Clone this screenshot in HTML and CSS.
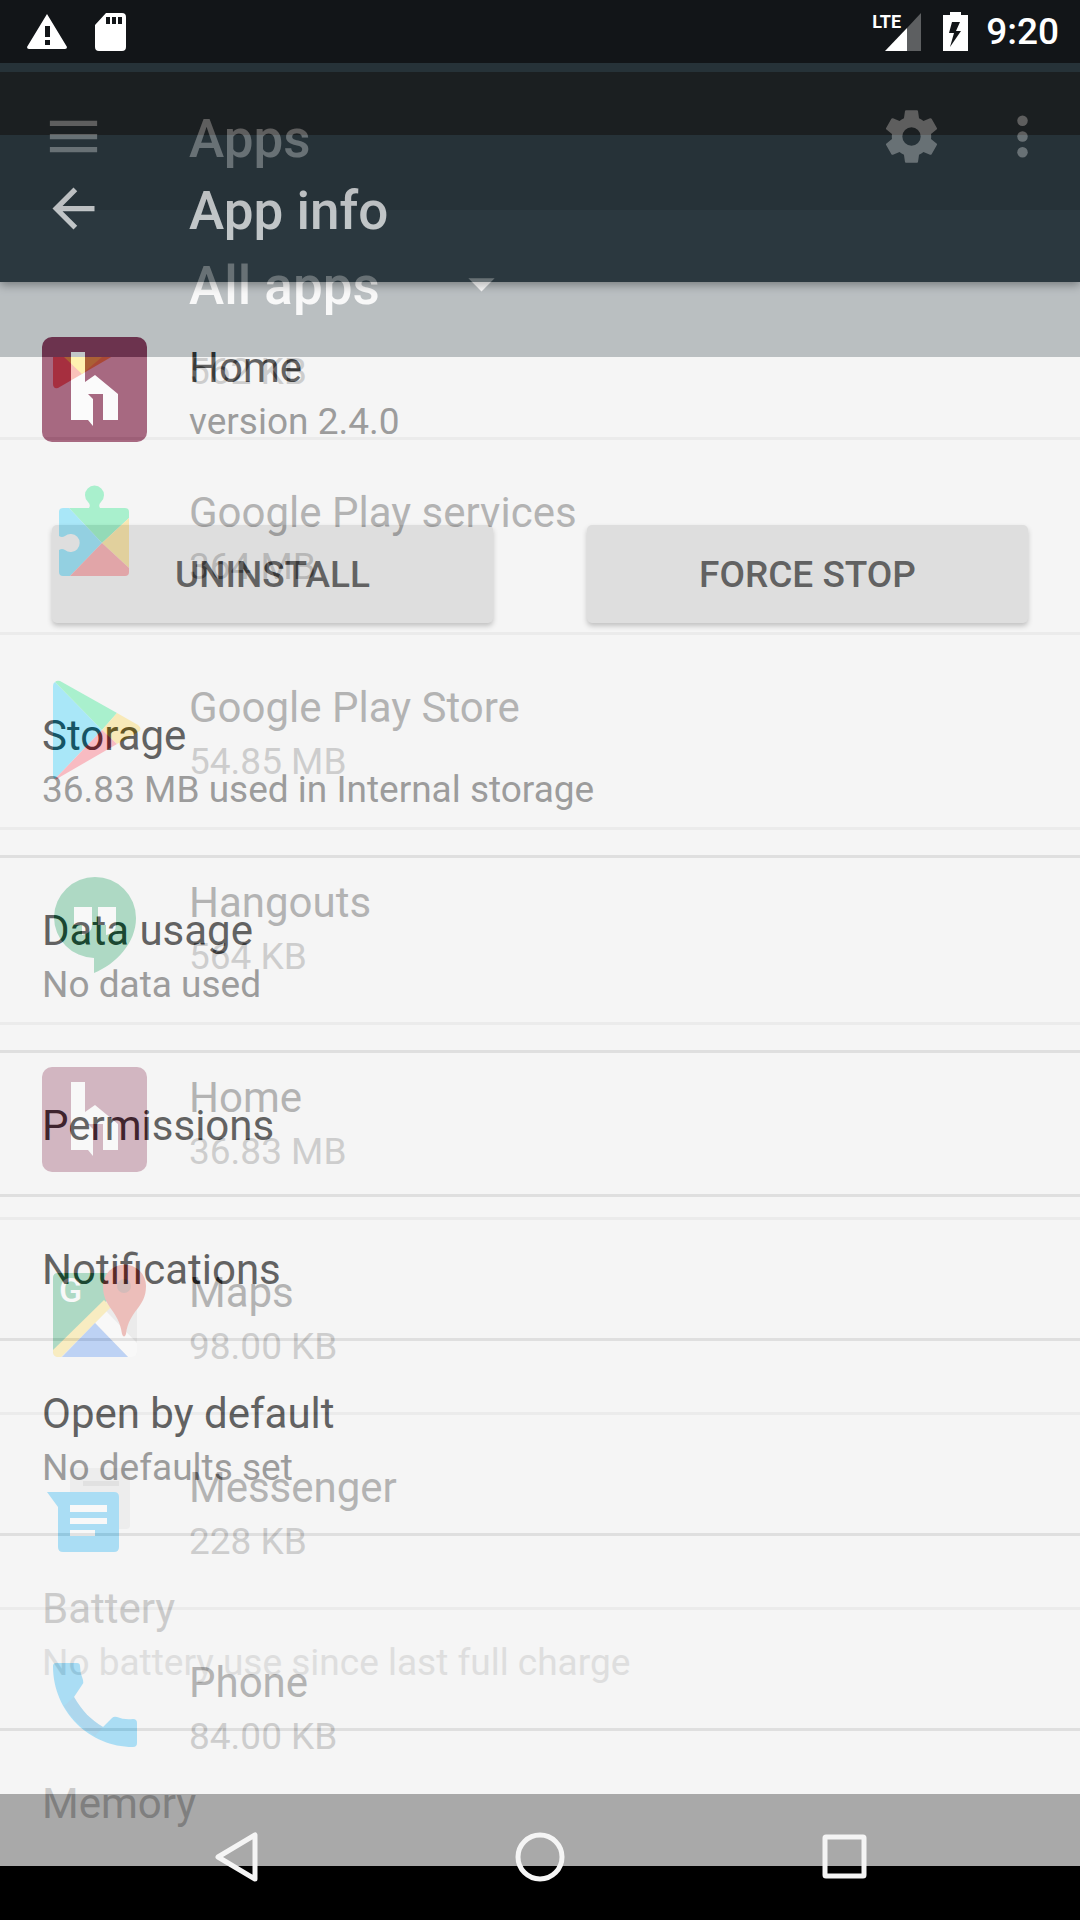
FILE: index.html
```html
<!DOCTYPE html>
<html lang="en">
<head>
<meta charset="utf-8">
<meta name="viewport" content="width=device-width, initial-scale=1">
<title>App info</title>
<link rel="stylesheet" href="styles.css">
</head>
<body>
<svg class="defs" aria-hidden="true">
  <symbol id="home-logo" viewBox="0 0 105 105">
    <rect width="105" height="105" rx="10" fill="#852b4e"/>
    <path fill="#fff" d="M29 15h14v30l10-7 23 19v26H61V57H46l5 5v27l-5-6H29z"/>
  </symbol>
</svg>
<div class="device">

  <!-- Outgoing screen: list of installed apps -->
  <section class="page apps-page">
    <header class="apps-header">
      <div class="toolbar">
        <button class="icon-button" aria-label="Menu"><svg viewBox="0 0 24 24"><path d="M3 18h18v-2H3v2zm0-5h18v-2H3v2zm0-7v2h18V6H3z"/></svg></button>
        <h1 class="toolbar-title">Apps</h1>
        <div class="toolbar-actions">
          <button class="icon-button" aria-label="Settings"><svg viewBox="0 0 24 24"><path d="M19.43 12.98c.04-.32.07-.64.07-.98s-.03-.66-.07-.98l2.11-1.65c.19-.15.24-.42.12-.64l-2-3.46c-.12-.22-.39-.3-.61-.22l-2.49 1c-.52-.4-1.08-.73-1.69-.98l-.38-2.65C14.46 2.18 14.25 2 14 2h-4c-.25 0-.46.18-.49.42l-.38 2.65c-.61.25-1.17.59-1.69.98l-2.49-1c-.23-.09-.49 0-.61.22l-2 3.46c-.13.22-.07.49.12.64l2.11 1.65c-.04.32-.07.65-.07.98s.03.66.07.98l-2.11 1.65c-.19.15-.24.42-.12.64l2 3.46c.12.22.39.3.61.22l2.49-1c.52.4 1.08.73 1.69.98l.38 2.65c.03.24.24.42.49.42h4c.25 0 .46-.18.49-.42l.38-2.65c.61-.25 1.17-.59 1.69-.98l2.49 1c.23.09.49 0 .61-.22l2-3.46c.12-.22.07-.49-.12-.64l-2.11-1.65zM12 15.500a3.500 3.500 0 1 1 0-7 3.500 3.500 0 0 1 0 7z"/></svg></button>
          <button class="icon-button" aria-label="More options"><svg viewBox="0 0 24 24"><circle cx="12" cy="6" r="2"/><circle cx="12" cy="12" r="2"/><circle cx="12" cy="18" r="2"/></svg></button>
        </div>
      </div>
      <div class="filter">
        <select class="filter-select" aria-label="Filter apps"><option>All apps</option></select>
        <svg class="filter-arrow" viewBox="0 0 24 24" aria-hidden="true"><path d="M7 10l5 5 5-5z"/></svg>
      </div>
    </header>
    <div class="app-viewport">
      <ul class="rows app-list">
        <li><a class="row" href="#">
          <svg class="app-icon" viewBox="0 0 105 105"><path fill="#f03a20" d="M11 6q0-4 4-2l25 83-24 14q-5 1-5-4z"/><path fill="#ff8a00" d="M30 20l65 31q3 2 0 4L40 87z"/><path fill="#ffd800" d="M14 4l46 66-20 17-18-17z"/></svg>
          <span class="row-text"><span class="row-title">Google Play Movies</span><span class="row-summary">562 KB</span></span></a></li>
        <li><a class="row" href="#">
          <svg class="app-icon" viewBox="0 0 105 105"><path fill="#00e676" d="M27 26h20q2-3-1-6a9.500 9.500 0 1 1 13 0q-3 3-1 6h25q4 0 4 4v6L60 61z"/><path fill="#00c8ff" d="M27 26H21q-4 0-4 4v24q3 2 6 0a9 9 0 1 1 0 14q-3-2-6 0v22q0 4 4 4h7l32-33z"/><path fill="#ffc820" d="M87 36v50L60 61z"/><path fill="#ff3a44" d="M28 94h55q4 0 4-4v-4L60 61z"/></svg>
          <span class="row-text"><span class="row-title">Google Play services</span><span class="row-summary">364 MB</span></span></a></li>
        <li><a class="row" href="#">
          <svg class="app-icon" viewBox="0 0 105 105"><path fill="#00c8ff" d="M13 5q-2 1-2 4v89q0 3 2 4l47-49z"/><path fill="#00e676" d="M13 5q2-2 5-1l57 32-15 17z"/><path fill="#ffd030" d="M75 36l21 12q5 4 0 7L75 67 60 53z"/><path fill="#ff3a50" d="M13 102q2 1 5-2l57-33-15-14z"/></svg>
          <span class="row-text"><span class="row-title">Google Play Store</span><span class="row-summary">54.85 MB</span></span></a></li>
        <li><a class="row" href="#">
          <svg class="app-icon" viewBox="0 0 105 105"><path fill="#0f9d58" d="M53 5a41 41 0 0 1 41 41c0 25-20 46-42 55V86A41 41 0 0 1 12 45 41 41 0 0 1 53 5z"/><path fill="#fff" d="M32 35h18v18q0 8-10 10V53h-8zM56 35h18v18q0 8-10 10V53h-8z"/></svg>
          <span class="row-text"><span class="row-title">Hangouts</span><span class="row-summary">564 KB</span></span></a></li>
        <li><a class="row" href="#">
          <svg class="app-icon"><use href="#home-logo"/></svg>
          <span class="row-text"><span class="row-title">Home</span><span class="row-summary">36.83 MB</span></span></a></li>
        <li><a class="row" href="#">
          <svg class="app-icon" viewBox="0 0 105 105"><rect x="11" y="11" width="84" height="84" rx="5" fill="#d5d5d5"/><path fill="#0f9d58" d="M16 11h54v23L11 91V16q0-5 5-5z"/><path fill="#fff" d="M53 61l11-12 31 32v9q0 5-5 5h-4z"/><path fill="#ffd84d" d="M11 88l51-50 7 7-50 50h-4q-4-1-4-5z"/><path fill="#4285f4" d="M53 61l33 34H20z"/><path fill="#db4437" d="M61 24a21.500 21.500 0 0 1 43 0c0 22-17 24-20 48q-2 5-4 0C77 48 61 46 61 24z"/><circle cx="82" cy="24" r="7" fill="#8c3a35"/><text class="maps-letter" x="17" y="40">G</text></svg>
          <span class="row-text"><span class="row-title">Maps</span><span class="row-summary">98.00 KB</span></span></a></li>
        <li><a class="row" href="#">
          <svg class="app-icon" viewBox="0 0 105 105"><rect x="28" y="11" width="60" height="61" rx="4" fill="#dcdcdc"/><path fill="#b5b5b5" d="M41 24h36v5H41z"/><path fill="#03a9f4" d="M5 35h67q5 0 5 5v50q0 5-5 5H21q-5 0-5-5V50z"/><path fill="#fff" d="M28 48h37v7H28zM28 61h37v6H28zM28 73h25v6H28z"/></svg>
          <span class="row-text"><span class="row-title">Messenger</span><span class="row-summary">228 KB</span></span></a></li>
        <li><a class="row" href="#">
          <svg class="app-icon" viewBox="0 0 105 105"><path fill="#03a9f4" d="M14 11h21q3 0 3 3 0 7 3 14 1 3-1 5l-8 12c8 14 17 23 29 30l9-9q2-2 5-1 7 3 16 2 4 0 4 4v20q0 4-4 4C48 95 11 60 11 14q0-3 3-3z"/><path fill="#1c7fc4" opacity=".5" d="M32 45c8 14 17 23 29 30l-8 9Q32 71 22 54z"/></svg>
          <span class="row-text"><span class="row-title">Phone</span><span class="row-summary">84.00 KB</span></span></a></li>
      </ul>
    </div>
  </section>

  <!-- Incoming screen: details of one app, fading in -->
  <section class="page info-page">
    <header class="info-header">
      <div class="toolbar">
        <button class="icon-button" aria-label="Back"><svg viewBox="0 0 24 24"><path d="M20 11H7.830l5.590-5.590L12 4l-8 8 8 8 1.410-1.410L7.830 13H20v-2z"/></svg></button>
        <h1 class="toolbar-title">App info</h1>
      </div>
    </header>
    <div class="app-summary">
      <svg class="app-icon"><use href="#home-logo"/></svg>
      <div class="row-text"><span class="row-title">Home</span><span class="row-summary">version 2.4.0</span></div>
    </div>
    <div class="app-actions">
      <button class="raised">UNINSTALL</button>
      <button class="raised">FORCE STOP</button>
    </div>
    <ul class="rows">
      <li><a class="row" href="#"><span class="row-text"><span class="row-title">Storage</span><span class="row-summary">36.83 MB used in Internal storage</span></span></a></li>
      <li><a class="row" href="#"><span class="row-text"><span class="row-title">Data usage</span><span class="row-summary">No data used</span></span></a></li>
      <li><a class="row" href="#"><span class="row-text"><span class="row-title">Permissions</span></span></a></li>
      <li><a class="row" href="#"><span class="row-text"><span class="row-title">Notifications</span></span></a></li>
      <li><a class="row" href="#"><span class="row-text"><span class="row-title">Open by default</span><span class="row-summary">No defaults set</span></span></a></li>
      <li><a class="row disabled" href="#"><span class="row-text"><span class="row-title">Battery</span><span class="row-summary">No battery use since last full charge</span></span></a></li>
      <li><a class="row disabled" href="#"><span class="row-text"><span class="row-title">Memory</span></span></a></li>
    </ul>
  </section>

  <div class="status-bar">
    <svg class="status-warning" viewBox="0 0 40 35"><path fill="#fff" fill-rule="evenodd" d="M20 0l20 33q0 2-2 2H2q-2 0-2-2zM18 12v11h5V12zM18 26v5h5v-5z"/></svg>
    <svg class="status-card" viewBox="0 0 31 38"><path fill="#fff" fill-rule="evenodd" d="M11 0h16q4 0 4 4v30q0 4-4 4H4q-4 0-4-4V12zM11 4v7h4V4zM17 4v7h4V4zM23 4v7h4V4z"/></svg>
    <div class="status-right">
      <div class="signal"><span class="lte">LTE</span><svg viewBox="0 0 36 38"><path fill="#5d5f61" d="M36 0v38H22V15z"/><path fill="#fff" d="M22 15v23H0z"/></svg></div>
      <svg class="battery" viewBox="0 0 25 39"><path fill="#fff" fill-rule="evenodd" d="M7 0h11v3h7v36H0V3h7zM9 10L6 21h5L7 35l11-16h-5l4-9z"/></svg>
      <time>9:20</time>
    </div>
  </div>

  <nav class="nav-bar">
    <button class="icon-button" aria-label="Back"><svg viewBox="0 0 63 63"><path d="M50 9v44L13 31z"/></svg></button>
    <button class="icon-button" aria-label="Home"><svg viewBox="0 0 63 63"><circle cx="31" cy="31" r="22"/></svg></button>
    <button class="icon-button" aria-label="Recent apps"><svg viewBox="0 0 63 63"><rect x="12" y="11" width="39" height="39" rx="1"/></svg></button>
  </nav>
</div>
</body>
</html>
```

FILE: styles.css
```css
* { box-sizing: border-box; }

:root {
  --status: 63px;
  --offset: 72px;
  --nav: 126px;
  --bar: 147px;
  --edge: 42px;
}

body {
  margin: 0;
  background: #000;
  font-family: Roboto, "Liberation Sans", sans-serif;
}

ul, h1 { margin: 0; padding: 0; }
ul { list-style: none; }
a { color: inherit; text-decoration: none; }
button, select { font: inherit; border: 0; padding: 0; }

.defs { position: absolute; width: 0; height: 0; }

.device {
  position: relative;
  display: grid;
  height: 100vh;
  overflow: hidden;
}

.page {
  grid-area: 1 / 1;
  display: flex;
  flex-direction: column;
  height: calc(100vh - var(--nav));
  overflow: hidden;
  background: #f5f5f5;
}

.apps-header {
  flex: none;
  padding-top: var(--status);
  background: #37474f;
}
.apps-header .toolbar { background: #263238; }

.info-page {
  z-index: 1;
  margin-top: var(--offset);
  opacity: .69;
}
.info-header {
  flex: none;
  border-top: var(--status) solid #171717;
  background: #263238;
  box-shadow: 0 3px 9px rgba(0, 0, 0, .4);
}

.toolbar {
  display: flex;
  align-items: center;
  height: var(--bar);
  padding: 0 26px 0 var(--edge);
}
.toolbar-title {
  margin-left: 84px;
  padding-top: 5px;
  color: #fff;
  font-size: 53px;
  font-weight: 500;
  line-height: 62px;
}
.toolbar-actions { display: flex; gap: 48px; margin-left: auto; }

.icon-button {
  width: 63px;
  height: 63px;
  background: none;
}
.icon-button svg { display: block; width: 63px; height: 63px; fill: #fff; }

.filter {
  display: flex;
  align-items: center;
  height: var(--bar);
  padding-left: 189px;
}
.filter-select {
  width: 261px;
  padding-top: 5px;
  appearance: none;
  background: none;
  color: #fff;
  font-size: 53px;
  font-weight: 500;
  line-height: 62px;
}
.filter-arrow { width: 63px; height: 63px; fill: #fff; }

.app-viewport { flex: 1; overflow: hidden; }
/* list scrolled part of the way through its first row */
.app-list { margin-top: -112px; }

.rows li { border-bottom: 3px solid #d6d6d6; }
.row {
  display: flex;
  gap: var(--edge);
  min-height: 141px;
  padding: 42px var(--edge) 39px;
}
.row:has(.row-summary) { min-height: 192px; }
.app-icon { flex: none; width: 105px; height: 105px; }
.row-text { display: flex; flex-direction: column; padding-top: 3px; }
.row-title { color: #212121; font-size: 42px; line-height: 56px; }
.row-summary { color: #757575; font-size: 37px; line-height: 52px; }
.disabled .row-title { color: #b9b9b9; }
.disabled .row-summary { color: #d4d4d4; }
.maps-letter { fill: #fff; font-size: 34px; font-weight: 500; }

.app-summary {
  display: flex;
  gap: var(--edge);
  padding: 55px var(--edge) 0;
}
.app-actions {
  display: flex;
  gap: 94px;
  padding: 77px 52px 40px;
}
.raised {
  flex: 1;
  height: 98px;
  border-radius: 5px;
  background: #d5d5d5;
  box-shadow: 0 3px 5px rgba(0, 0, 0, .3);
  color: #212121;
  font-size: 37px;
  font-weight: 500;
}

.status-bar {
  position: absolute;
  z-index: 2;
  top: 0;
  left: 0;
  right: 0;
  display: flex;
  align-items: center;
  height: var(--status);
  padding: 0 21px 0 27px;
  background: #121518;
  color: #fff;
}
.status-warning { width: 40px; height: 35px; }
.status-card { width: 31px; height: 38px; margin-left: 28px; }
.status-right { display: flex; align-items: center; margin-left: auto; }
.signal { display: flex; align-items: flex-start; margin-right: 22px; }
.signal svg { width: 36px; height: 38px; }
.lte {
  margin-right: -16px;
  font-size: 18px;
  font-weight: 700;
  line-height: 18px;
}
.battery { width: 25px; height: 39px; margin-right: 18px; }
.status-right time { font-size: 37px; font-weight: 500; line-height: 44px; }

.nav-bar {
  position: absolute;
  z-index: 2;
  left: 0;
  right: 0;
  bottom: 0;
  display: flex;
  justify-content: center;
  align-items: center;
  gap: 241px;
  height: var(--nav);
}
.nav-bar .icon-button svg {
  fill: none;
  stroke: #f5f5f5;
  stroke-width: 5;
  stroke-linejoin: round;
}
```
